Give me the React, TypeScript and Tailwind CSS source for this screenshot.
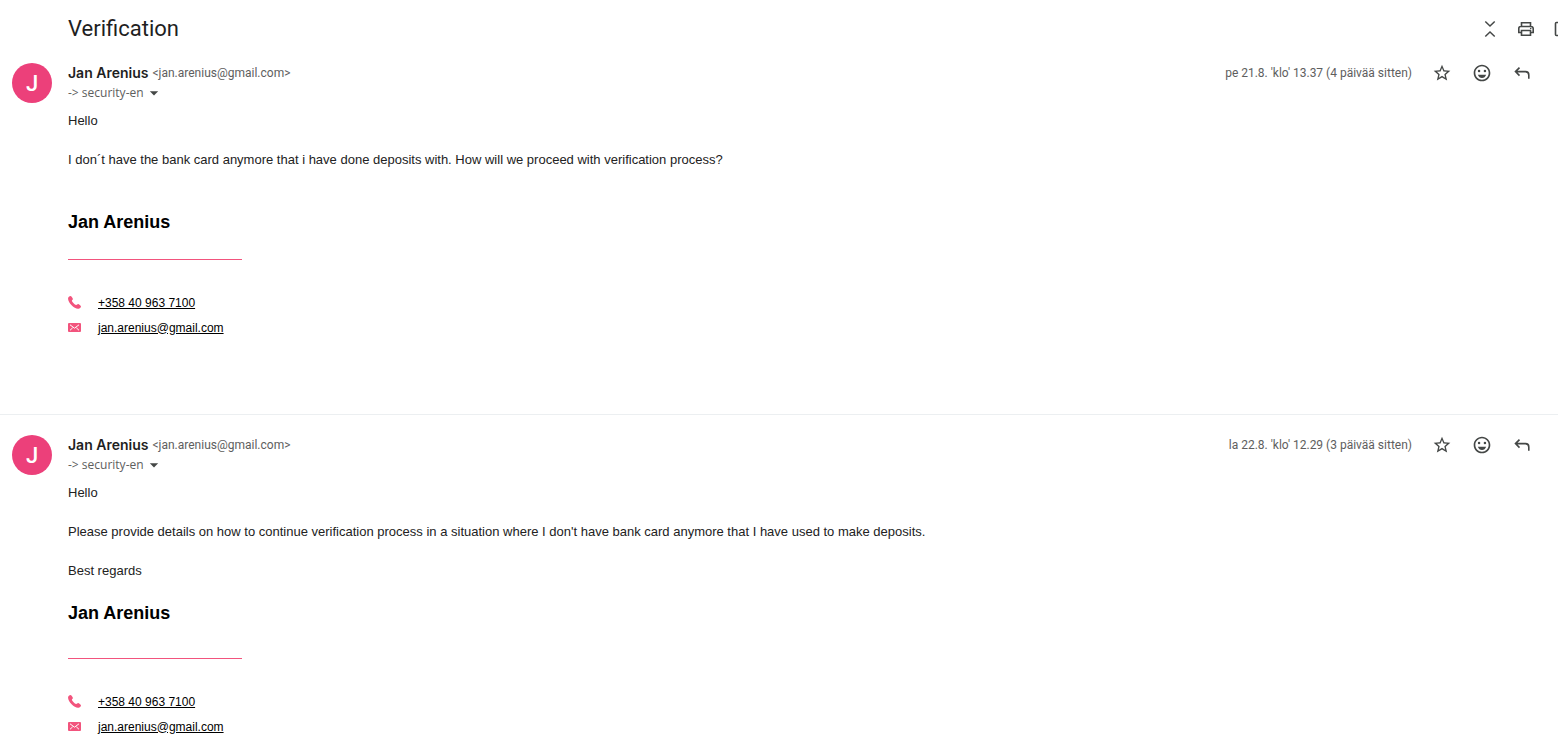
import { useState } from "react";
import { MdArrowDropDown, MdOutlineEmojiEmotions, MdStar, MdStarBorder } from "react-icons/md";

interface Message {
  id: number;
  date: string;
  paragraphs: string[];
  signatureClass: string;
  ruleClass: string;
}

const sender = {
  name: "Jan Arenius",
  email: "jan.arenius@gmail.com",
  phone: "+358 40 963 7100",
};

const messages: Message[] = [
  {
    id: 1,
    date: "pe 21.8. 'klo' 13.37 (4 päivää sitten)",
    paragraphs: [
      "Hello",
      "I don´t have the bank card anymore that i have done deposits with. How will we proceed with verification process?",
    ],
    signatureClass: "mt-10",
    ruleClass: "mt-[25px]",
  },
  {
    id: 2,
    date: "la 22.8. 'klo' 12.29 (3 päivää sitten)",
    paragraphs: [
      "Hello",
      "Please provide details on how to continue verification process in a situation where I don't have bank card anymore that I have used to make deposits.",
      "Best regards",
    ],
    signatureClass: "mt-5",
    ruleClass: "mt-[33px]",
  },
];

const CollapseIcon = () => (
  <svg viewBox="0 0 20 20" className="size-5" fill="none" stroke="currentColor" strokeWidth="1.5">
    <path d="M5.3 2.5 10 7l4.7-4.5M5.3 17.5 10 13l4.7 4.5" />
  </svg>
);

const PrintIcon = () => (
  <svg viewBox="0 0 20 20" className="size-5" fill="none" stroke="currentColor" strokeWidth="1.6">
    <path d="M5.5 7.500v-3.700h9v3.700M5.500 13.500h-2.700V9.500a2 2 0 0 1 2-2h10.400a2 2 0 0 1 2 2v4h-2.700" />
    <path d="M5.500 11.500h9v4.700h-9z" />
    <circle cx="14.700" cy="9.500" r=".8" fill="currentColor" stroke="none" />
  </svg>
);

const NewWindowIcon = () => (
  <svg viewBox="0 0 20 20" className="size-5" fill="none" stroke="currentColor" strokeWidth="1.6">
    <path d="M9.5 3.500H4.500a1 1 0 0 0-1 1v11a1 1 0 0 0 1 1h11.500a1 1 0 0 0 1-1V11M11.500 3.500H17V9M17 3.500 8 12.500" />
  </svg>
);

const ReplyIcon = () => (
  <svg viewBox="0 0 20 20" className="size-5" fill="none" stroke="currentColor" strokeWidth="1.6">
    <path d="M7.500 4.600 3.500 8.600l4 4M3.500 8.600h10a3.300 3.300 0 0 1 3.300 3.300v3.900" />
  </svg>
);

const PhoneIcon = () => (
  <svg viewBox="0 0 13 13" className="size-[13px]" fill="currentColor">
    <path d="M.3 1.500C.8.8 1.500 0 2.400 0c.9 0 2.500 2.200 2.500 3 0 .8-1.100 1.200-1 1.900.3 1.200 2.800 3.700 4.200 4 .8.1 1.200-1 2-1 .7 0 2.900 1.700 2.900 2.500 0 .8-1 1.700-1.800 2.100C7.500 14.500-1.500 5.500.3 1.500Z" />
  </svg>
);

const MailIcon = () => (
  <svg viewBox="0 0 13 9" className="h-[9px] w-[13px]">
    <rect width="13" height="9" rx="1" fill="currentColor" />
    <path d="m2 1.800 4.500 3.400L11 1.800M2 7.300l2.700-2.500M11 7.300 8.300 4.800" fill="none" stroke="white" strokeWidth="1" />
  </svg>
);

const MessageCard = ({ message }: { message: Message }) => {
  const [starred, setStarred] = useState(false);

  return (
    <article className="flex gap-4 border-t border-[#eceff1] pt-5 pr-[26px] pb-[74px] pl-3 first:border-transparent last:pb-0">
      <div className="flex size-10 shrink-0 items-center justify-center rounded-full bg-[#ec407a] text-[22px] font-medium text-white">
        J
      </div>

      <div className="min-w-0 flex-1">
        {/* Sender and actions */}
        <div className="flex justify-between text-xs text-[#5e5e5e]">
          <div>
            <div className="flex items-center gap-1 leading-5">
              <h2 className="font-[Inter,sans-serif] text-sm leading-5 font-semibold text-[#1f1f1f]">{sender.name}</h2>
              <span>&lt;{sender.email}&gt;</span>
            </div>
            <button type="button" aria-label="Show details" className="flex items-center font-['Open_Sans',sans-serif] leading-5">
              -&gt; security-en
              <MdArrowDropDown className="size-5 text-[#444746]" />
            </button>
          </div>
          <div className="flex h-5 items-center gap-5 text-[#444746]">
            <time className="text-[#5e5e5e]">{message.date}</time>
            <button type="button" aria-label="Star" onClick={() => setStarred(!starred)}>
              {starred ? <MdStar className="size-5" /> : <MdStarBorder className="size-5" />}
            </button>
            <button type="button" aria-label="Add reaction">
              <MdOutlineEmojiEmotions className="size-5" />
            </button>
            <button type="button" aria-label="Reply">
              <ReplyIcon />
            </button>
          </div>
        </div>

        {/* Body */}
        <div className="mt-2 flex flex-col gap-[19px] font-['Liberation_Sans',sans-serif] text-[13px] leading-5 text-[#222222]">
          {message.paragraphs.map((text) => (
            <p key={text}>{text}</p>
          ))}
        </div>

        {/* Signature */}
        <div className={`font-['Liberation_Sans',sans-serif] text-xs text-black ${message.signatureClass}`}>
          <h3 className="text-lg leading-6 font-bold">{sender.name}</h3>
          <hr className={`w-[174px] border-[#f2547d] ${message.ruleClass}`} />
          <div className="mt-[30px] flex h-[25px] items-center gap-[17px] text-[#f2547d]">
            <PhoneIcon />
            <a href="tel:+358409637100" className="text-black underline">{sender.phone}</a>
          </div>
          <div className="flex h-[25px] items-center gap-[17px] text-[#f2547d]">
            <MailIcon />
            <a href="mailto:jan.arenius@gmail.com" className="text-black underline">{sender.email}</a>
          </div>
        </div>
      </div>
    </article>
  );
};

const App = () => {
  return (
    <main className="overflow-hidden bg-white font-[Roboto,sans-serif]">
      <header className="flex items-center justify-between pt-[15px] pl-[68px]">
        <h1 className="text-[22px] leading-[27px] text-[#1f1f1f]">Verification</h1>
        <div className="-mr-3.5 flex items-center gap-4 text-[#444746]">
          <button type="button" aria-label="Collapse all">
            <CollapseIcon />
          </button>
          <button type="button" aria-label="Print all">
            <PrintIcon />
          </button>
          <button type="button" aria-label="Open in new window">
            <NewWindowIcon />
          </button>
        </div>
      </header>
      <div>
        {messages.map((message) => (
          <MessageCard key={message.id} message={message} />
        ))}
      </div>
    </main>
  );
};

export default App;
